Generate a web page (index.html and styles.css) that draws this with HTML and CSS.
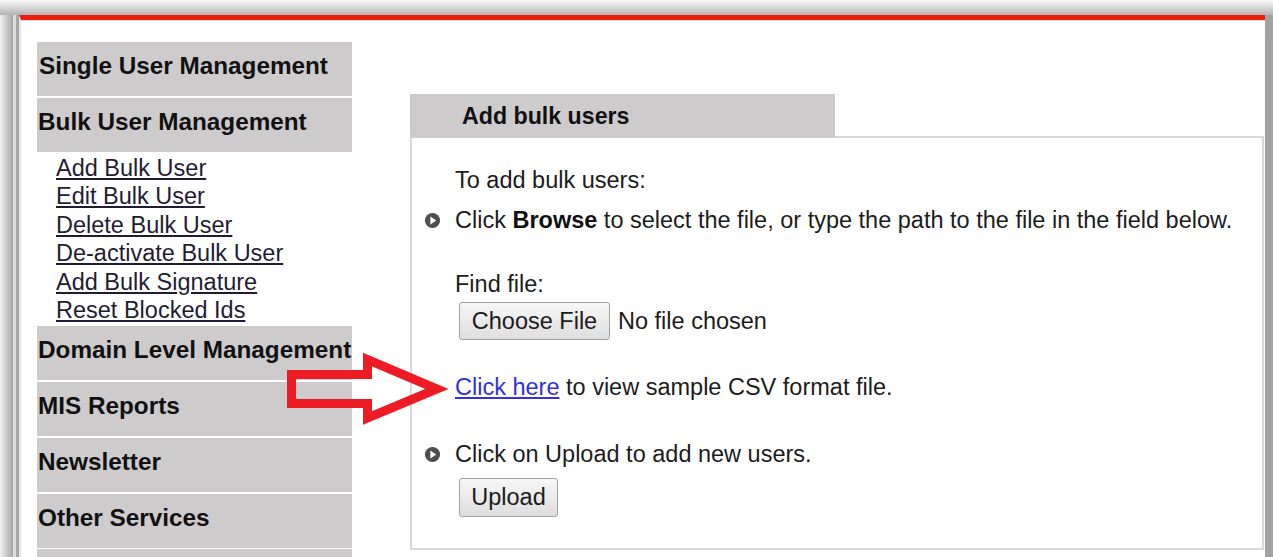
FILE: index.html
```html
<!DOCTYPE html>
<html lang="en">
<head>
<meta charset="utf-8">
<title>Bulk User Management</title>
<link rel="stylesheet" href="styles.css">
</head>
<body>
<div class="shot">
  <div class="window">
    <div class="frame">
      <div class="page">
        <nav class="sidebar">
          <div class="menu-head first">Single User Management</div>
          <div class="menu-head">Bulk User Management</div>
          <ul class="submenu">
            <li><a href="#">Add Bulk User</a></li>
            <li><a href="#">Edit Bulk User</a></li>
            <li><a href="#">Delete Bulk User</a></li>
            <li><a href="#">De-activate Bulk User</a></li>
            <li><a href="#">Add Bulk Signature</a></li>
            <li><a href="#">Reset Blocked Ids</a></li>
          </ul>
          <div class="menu-head">Domain Level Management</div>
          <div class="menu-head">MIS Reports</div>
          <div class="menu-head">Newsletter</div>
          <div class="menu-head">Other Services</div>
          <div class="menu-head"></div>
        </nav>
        <main class="panel">
          <div class="panel-tabs">
            <div class="tab">Add bulk users</div>
            <div class="tab-rest"></div>
          </div>
          <div class="panel-body">
            <p class="intro">To add bulk users:</p>
            <p class="step">
              <svg class="bullet" width="17" height="17" viewBox="0 0 17 17"><circle cx="8.5" cy="8.5" r="7.6" fill="#4e4e4e"/><polygon points="6.4,4.4 12.2,8.5 6.4,12.6" fill="#fff"/></svg>
              <span>Click <b>Browse</b> to select the file, or type the path to the file in the field below.</span>
            </p>
            <p class="label">Find file:</p>
            <div class="file-row">
              <button class="btn btn-file" type="button">Choose File</button>
              <span class="file-status">No file chosen</span>
            </div>
            <p class="sample"><a href="#">Click here</a> to view sample CSV format file.</p>
            <p class="step step-upload">
              <svg class="bullet" width="17" height="17" viewBox="0 0 17 17"><circle cx="8.5" cy="8.5" r="7.6" fill="#4e4e4e"/><polygon points="6.4,4.4 12.2,8.5 6.4,12.6" fill="#fff"/></svg>
              <span>Click on Upload to add new users.</span>
            </p>
            <div class="upload-row">
              <button class="btn btn-upload" type="button">Upload</button>
            </div>
          </div>
        </main>
      </div>
    </div>
  </div>
  <svg class="callout" width="1273" height="557" viewBox="0 0 1273 557">
    <polygon points="291.5,374.5 367.5,374.5 367.5,359.5 437,389 367.5,418 367.5,403.5 291.5,403.5" fill="none" stroke="#ed1c24" stroke-width="9" stroke-linejoin="miter"/>
  </svg>
</div>
</body>
</html>
```

FILE: styles.css
```css
* { box-sizing: border-box; }

html, body {
  margin: 0;
  padding: 0;
  background: #fff;
}

body {
  font-family: "Liberation Sans", Arial, sans-serif;
  font-size: 23.5px;
  color: #1c1c1c;
}

/* capture frame with its soft shadow */
.shot {
  position: relative;
  width: 1273px;
  height: 557px;
  overflow: hidden;
  padding: 15px 0 0 13px;
  background:
    linear-gradient(to bottom, #fbfbfb 0, #b4b4b4 15px, transparent 15px),
    linear-gradient(to right, #f1f1f1 0, #a5a5a5 13px, #fff 13px);
}

.window {
  height: 542px;
  display: flex;
  border-left: 3px solid #dedede;
  border-right: 8px solid #a2a2a2;
}

.frame {
  flex: 1;
  display: flex;
  border-left: 3px solid #a6a6a6;
}

.page {
  flex: 1;
  display: flex;
  align-items: flex-start;
  border-top: 5px solid #ec1e0e;
  border-left: 2px solid #e6e6e6;
  box-shadow: inset 0 1px 0 #e4dcdc;
  padding: 22px 1px 0 16px;
  gap: 58px;
}

/* left navigation */
.sidebar {
  width: 315px;
  flex: none;
  display: flex;
  flex-direction: column;
  gap: 1.75px;
}

.menu-head {
  height: 54px;
  padding: 10px 0 0 1px;
  line-height: 28px;
  font-size: 24.3px;
  font-weight: bold;
  color: #111;
  background: #cdcbcb;
  white-space: nowrap;
  overflow: hidden;
}

.menu-head.first {
  padding-left: 2px;
}

.submenu {
  list-style: none;
  margin: 0;
  padding: 0 0 0 19px;
  line-height: 28.5px;
}

.submenu a {
  color: #1f1d33;
  text-decoration: underline;
}

/* content panel */
.panel {
  width: 854px;
  flex: none;
  margin-top: 52px;
}

.panel-tabs {
  display: flex;
  height: 44px;
}

.tab {
  width: 425px;
  padding: 1px 0 0 52px;
  line-height: 43px;
  font-size: 23.2px;
  font-weight: bold;
  color: #111;
  background: #cdcbcb;
}

.tab-rest {
  flex: 1;
  border-bottom: 2px solid #d9d9d9;
}

.panel-body {
  border: 2px solid #d9d9d9;
  border-top: 0;
  padding: 28px 20px 31px 43px;
  line-height: 28px;
}

.panel-body p {
  margin: 0;
}

.step {
  display: flex;
  align-items: center;
  gap: 14px;
  margin-left: -31px !important;
  margin-top: 12px !important;
}

.step b {
  font-weight: bold;
  color: #111;
}

.bullet {
  flex: none;
}

.label {
  margin-top: 36px !important;
}

.file-row {
  display: flex;
  align-items: center;
  gap: 8px;
  margin-top: 4px;
}

.btn {
  font-family: inherit;
  font-size: 23.5px;
  color: #1c1c1c;
  height: 38px;
  line-height: 36px;
  padding: 0;
  margin-left: 4px;
  white-space: nowrap;
  border: 1px solid #a3a3a3;
  border-radius: 3px;
  background: linear-gradient(to bottom, #f7f7f7, #dedede);
}

.btn-file {
  width: 151px;
}

.btn-upload {
  width: 99px;
  height: 39px;
  line-height: 37px;
}

.sample {
  margin-top: 33px !important;
}

.sample a {
  color: #3232dc;
  text-decoration: underline;
}

.step-upload {
  margin-top: 39px !important;
}

.upload-row {
  margin-top: 10px;
}

/* annotation arrow drawn over the page */
.callout {
  position: absolute;
  left: 0;
  top: 0;
  pointer-events: none;
}
```
